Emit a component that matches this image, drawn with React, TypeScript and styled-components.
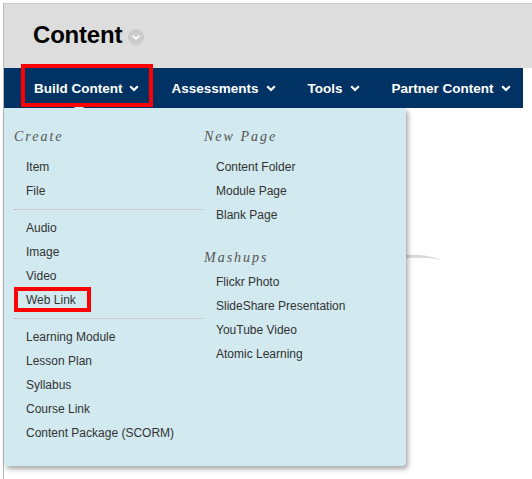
import React, { FC } from "react";
import styled, { createGlobalStyle } from "styled-components";

const GlobalStyle = createGlobalStyle`
  html, body {
    margin: 0;
    padding: 0;
    background: #ffffff;
  }
  body {
    font-family: "Liberation Sans", Arial, sans-serif;
  }
`;

type MenuEntry = { label: string; marked?: boolean } | "divider";

interface MenuGroup {
  title: string;
  entries: MenuEntry[];
}

const leftGroups: MenuGroup[] = [
  {
    title: "Create",
    entries: [
      { label: "Item" },
      { label: "File" },
      "divider",
      { label: "Audio" },
      { label: "Image" },
      { label: "Video" },
      { label: "Web Link", marked: true },
      "divider",
      { label: "Learning Module" },
      { label: "Lesson Plan" },
      { label: "Syllabus" },
      { label: "Course Link" },
      { label: "Content Package (SCORM)" },
    ],
  },
];

const rightGroups: MenuGroup[] = [
  {
    title: "New Page",
    entries: [{ label: "Content Folder" }, { label: "Module Page" }, { label: "Blank Page" }],
  },
  {
    title: "Mashups",
    entries: [
      { label: "Flickr Photo" },
      { label: "SlideShare Presentation" },
      { label: "YouTube Video" },
      { label: "Atomic Learning" },
    ],
  },
];

const navItems = ["Build Content", "Assessments", "Tools", "Partner Content"];

const Chevron: FC = () => (
  <svg width="10" height="7" viewBox="0 0 10 7">
    <polyline points="1.2,1.2 5,5 8.8,1.2" fill="none" stroke="#ffffff" strokeWidth="2.2" />
  </svg>
);

const App: FC = () => {
  return (
    <>
      <GlobalStyle />
      <Page>
        <Header>
          <Title>Content</Title>
          <TitleMenu>
            <svg width="16" height="16" viewBox="0 0 16 16">
              <circle cx="8" cy="8" r="8" fill="#cccccc" />
              <polyline points="4.6,6.6 8,9.8 11.4,6.6" fill="none" stroke="#ffffff" strokeWidth="1.8" />
            </svg>
          </TitleMenu>
        </Header>
        <Nav>
          {navItems.map((item, i) => (
            <NavItem key={item}>
              {item}
              <Chevron />
              {i === 0 && <NavMark />}
            </NavItem>
          ))}
        </Nav>
        <Swoosh width="40" height="12" viewBox="0 0 40 12">
          <path d="M0 3 Q20 2 36 8 Q22 5 0 6 Z" fill="#d9d9d9" />
        </Swoosh>
        <Panel>
          <Column>
            {leftGroups.map((group, i) => (
              <Group key={group.title} group={group} index={i} />
            ))}
          </Column>
          <Column>
            {rightGroups.map((group, i) => (
              <Group key={group.title} group={group} index={i} />
            ))}
          </Column>
        </Panel>
      </Page>
    </>
  );
};

const Group: FC<{ group: MenuGroup; index: number }> = ({ group, index }) => (
  <>
    <Heading $later={index > 0}>{group.title}</Heading>
    {group.entries.map((entry, i) =>
      entry === "divider" ? (
        <Divider key={`d${i}`} />
      ) : (
        <Item key={entry.label}>
          {entry.label}
          {entry.marked && <ItemMark />}
        </Item>
      )
    )}
  </>
);

const Page = styled.div`
  position: relative;
  margin: 3px 0 0 3px;
  min-height: 475px;
  border-left: 1px solid #b8b8b8;
  border-top: 1px solid #c9c9c9;
`;

const Header = styled.header`
  height: 64px;
  display: flex;
  align-items: center;
  gap: 6px;
  padding-left: 29px;
  background: #dddddd;
`;

const Title = styled.h1`
  margin: 0 0 2px;
  font-size: 24px;
  font-weight: 700;
  color: #000000;
  letter-spacing: -0.2px;
`;

const TitleMenu = styled.span`
  display: flex;
  margin-top: 2px;
`;

const Nav = styled.nav`
  width: 505px;
  height: 40px;
  display: flex;
  align-items: center;
  padding-left: 14px;
  background: #003263;
`;

const NavItem = styled.div`
  position: relative;
  flex-shrink: 0;
  height: 100%;
  display: flex;
  align-items: center;
  gap: 7px;
  padding: 0 16px;
  font-size: 13.5px;
  font-weight: 700;
  white-space: nowrap;
  color: #ffffff;
`;

const NavMark = styled.span`
  position: absolute;
  left: 3px;
  right: 2px;
  top: -4px;
  bottom: 1px;
  border: 4px solid #ff0000;
  z-index: 2;
`;

const Swoosh = styled.svg`
  position: absolute;
  left: 402px;
  top: 248px;
`;

const Panel = styled.div`
  position: relative;
  z-index: 1;
  width: 392px;
  display: grid;
  grid-template-columns: 190px 1fr;
  padding: 19px 0 21px 10px;
  background: #d1e9ef;
  border-radius: 0 0 4px 4px;
  box-shadow: 2px 3px 5px rgba(0, 0, 0, 0.35);

  &::before {
    content: "";
    position: absolute;
    top: -5px;
    left: 70px;
    border-left: 5px solid transparent;
    border-right: 5px solid transparent;
    border-bottom: 5px solid #d1e9ef;
  }
`;

const Column = styled.div`
  display: flex;
  flex-direction: column;
`;

const Heading = styled.div<{ $later?: boolean }>`
  height: 20px;
  line-height: 20px;
  margin: ${(p) => (p.$later ? "21px 0 2px" : "0 0 8px")};
  font-family: "Liberation Serif", "Times New Roman", serif;
  font-style: italic;
  font-size: 14px;
  letter-spacing: 2px;
  color: #555555;
`;

const Item = styled.div`
  position: relative;
  height: 24px;
  line-height: 24px;
  padding-left: 12px;
  font-size: 12px;
  color: #333333;
`;

const ItemMark = styled.span`
  position: absolute;
  left: 0;
  top: -1px;
  width: 69px;
  height: 17px;
  border: 4px solid #ff0000;
`;

const Divider = styled.div`
  margin: 6px 0;
  border-top: 1px dotted #c2b3ad;
`;

export default App;
